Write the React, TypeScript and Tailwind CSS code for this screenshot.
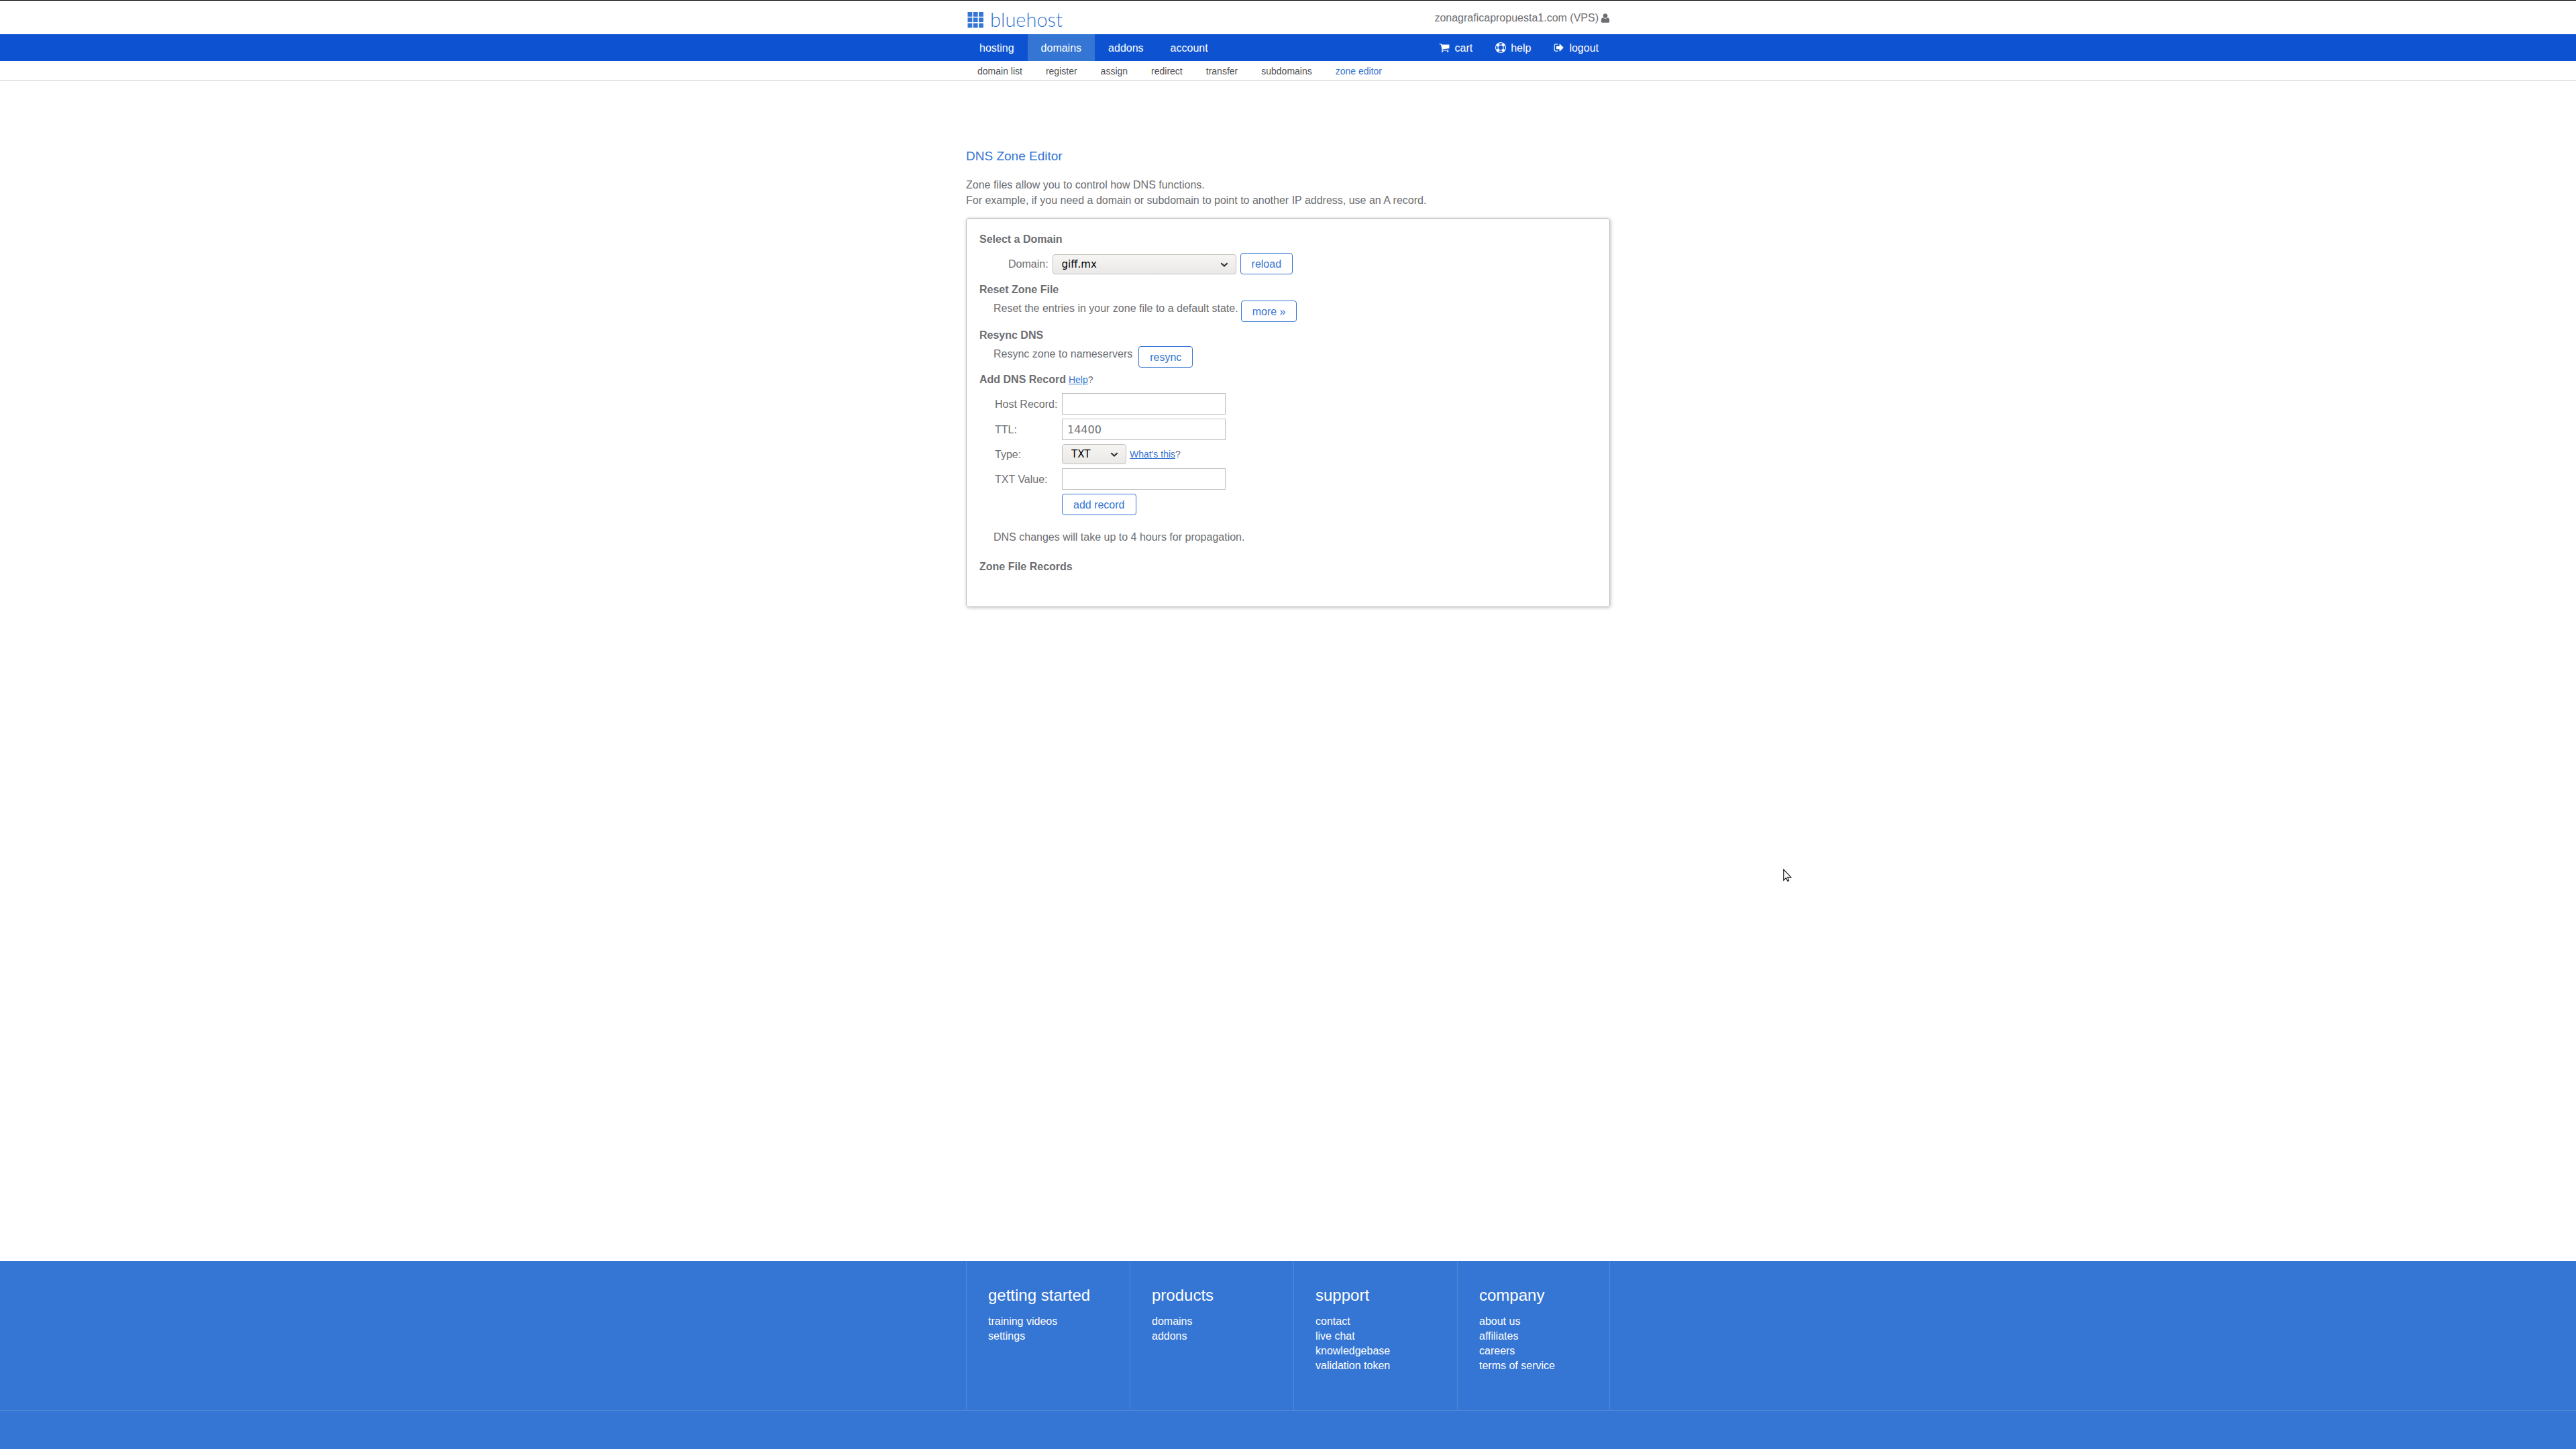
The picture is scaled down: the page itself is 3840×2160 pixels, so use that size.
import React from "react";

const ICONS = {
  cart: "M704 1536q0 52-38 90t-90 38-90-38-38-90 38-90 90-38 90 38 38 90zm896 0q0 52-38 90t-90 38-90-38-38-90 38-90 90-38 90 38 38 90zm128-1088v512q0 24-16.5 42.5t-40.5 21.5l-1044 122q13 60 13 70 0 16-24 64h920q26 0 45 19t19 45-19 45-45 19h-1024q-26 0-45-19t-19-45q0-11 8-31.5t16-36 21.5-40 15.5-29.5l-177-823h-204q-26 0-45-19t-19-45 19-45 45-19h256q16 0 28.5 6.5t19.5 15.5 13 24.5 8 26 5.5 29.5 4.5 26h1201q26 0 45 19t19 45z",
  help: "M896 0q182 0 348 71t286 191 191 286 71 348-71 348-191 286-286 191-348 71-348-71-286-191-191-286-71-348 71-348 191-286 286-191 348-71zm0 128q-190 0-361 90l194 194q82-28 167-28t167 28l194-194q-171-90-361-90zm-678 1129l194-194q-28-82-28-167t28-167l-194-194q-90 171-90 361t90 361zm678 407q190 0 361-90l-194-194q-82 28-167 28t-167-28l-194 194q171 90 361 90zm0-384q159 0 271.5-112.5t112.5-271.5-112.5-271.5-271.5-112.5-271.5 112.5-112.5 271.5 112.5 271.5 271.5 112.5zm484-217l194 194q90-171 90-361t-90-361l-194 194q28 82 28 167t-28 167z",
  logout: "M704 1440q0 4 1 20t.5 26.5-3 23.5-10 19.5-20.5 6.5h-320q-119 0-203.5-84.5t-84.5-203.5v-704q0-119 84.5-203.5t203.5-84.5h320q13 0 22.5 9.5t9.5 22.5q0 4 1 20t.5 26.5-3 23.5-10 19.5-20.5 6.5h-320q-66 0-113 47t-47 113v704q0 66 47 113t113 47h312l11.5 1 11.5 3 8 5.5 7 9 2 13.5zm928-544q0 26-19 45l-544 544q-19 19-45 19t-45-19-19-45v-288h-448q-26 0-45-19t-19-45v-384q0-26 19-45t45-19h448v-288q0-26 19-45t45-19 45 19l544 544q19 19 19 45z",
  user: "M1600 1405q0 120-73 189.5t-194 69.5h-874q-121 0-194-69.5t-73-189.5q0-53 3.5-103.5t14-109 26.5-108.5 43-97.5 62-81 85.5-53.5 111.5-20q9 0 42 21.5t74.5 48 108 48 133.5 21.5 133.5-21.5 108-48 74.5-48 42-21.5q61 0 111.5 20t85.5 53.5 62 81 43 97.5 26.5 108.5 14 109 3.5 103.5zm-320-893q0 159-112.5 271.5t-271.5 112.5-271.5-112.5-112.5-271.5 112.5-271.5 271.5-112.5 271.5 112.5 112.5 271.5z",
};

const mainNav = ["hosting", "domains", "addons", "account"];

const userNav = [
  { label: "cart", icon: ICONS.cart },
  { label: "help", icon: ICONS.help },
  { label: "logout", icon: ICONS.logout },
];

const subNav = [
  "domain list",
  "register",
  "assign",
  "redirect",
  "transfer",
  "subdomains",
  "zone editor",
];

const footerColumns = [
  { title: "getting started", links: ["training videos", "settings"] },
  { title: "products", links: ["domains", "addons"] },
  { title: "support", links: ["contact", "live chat", "knowledgebase", "validation token"] },
  { title: "company", links: ["about us", "affiliates", "careers", "terms of service"] },
];

const Logo = () => (
  <a href="#" className="flex items-center gap-2.5 pl-0.5 text-[#3575d3]">
    <svg className="w-6 h-6 mt-px" viewBox="0 0 24 24" fill="currentColor" aria-hidden="true">
      {[0, 8.3, 16.6].map((y) =>
        [0.5, 8.8, 17.1].map((x) => (
          <rect key={`${x}-${y}`} x={x} y={y} width="6.8" height="6.8" />
        ))
      )}
    </svg>
    <span className="font-[Lato,sans-serif] font-light text-[29px] leading-8">bluehost</span>
  </a>
);

type SelectProps = {
  id: string;
  options: string[];
  className: string;
};

const Select = ({ id, options, className }: SelectProps) => (
  <div className={`relative ${className}`}>
    <select
      id={id}
      className="appearance-none w-full h-[30px] pl-[13px] rounded border border-[#c4bfba] bg-linear-to-b from-[#f6f5f4] to-[#ebe9e8] font-['DejaVu_Sans',sans-serif] text-[15px] text-black"
    >
      {options.map((option) => (
        <option key={option}>{option}</option>
      ))}
    </select>
    <svg
      className="absolute right-3 top-3 w-3 h-2 pointer-events-none"
      viewBox="0 0 12 8"
      fill="none"
      stroke="#2e3436"
      strokeWidth="2.2"
      aria-hidden="true"
    >
      <path d="M1.3 1.2 6 5.6l4.7-4.4" />
    </svg>
  </div>
);

const Button = ({ children }: { children: React.ReactNode }) => (
  <button
    type="button"
    className="h-8 px-4 rounded border border-[#3575d3] bg-white text-[#3575d3] whitespace-nowrap cursor-pointer"
  >
    {children}
  </button>
);

const inputClass =
  "w-[244px] h-8 px-[7px] border border-[#bfbfbf] bg-white font-['DejaVu_Sans',sans-serif]";

const App = () => {
  return (
    <div className="relative min-h-screen flex flex-col bg-white text-[#6d6e71] text-base leading-[23px] font-['Liberation_Sans',Arial,sans-serif]">
      {/* Header */}
      <header>
        <div className="border-t border-black">
          <div className="max-w-[960px] mx-auto h-[50px] flex justify-between items-start">
            <div className="pt-3">
              <Logo />
            </div>
            <div className="flex items-center gap-0.5 pt-3.5">
              <span>zonagraficapropuesta1.com (VPS)</span>
              <svg className="w-4 h-4 -mr-px" viewBox="0 0 1792 1792" fill="currentColor" aria-hidden="true">
                <path d={ICONS.user} />
              </svg>
            </div>
          </div>
        </div>

        <nav className="bg-[#0d53d1] text-white">
          <div className="max-w-[960px] mx-auto flex justify-between">
            <div className="flex">
              {mainNav.map((item) => (
                <a
                  key={item}
                  href="#"
                  className={`h-10 px-5 flex items-center ${item === "domains" ? "bg-[#3575d3]" : ""}`}
                >
                  {item}
                </a>
              ))}
            </div>
            <div className="flex">
              {userNav.map((item) => (
                <a key={item.label} href="#" className="h-10 px-[17px] flex items-center gap-[7px]">
                  <svg className="w-4 h-4" viewBox="0 0 1792 1792" fill="currentColor" aria-hidden="true">
                    <path d={item.icon} />
                  </svg>
                  {item.label}
                </a>
              ))}
            </div>
          </div>
        </nav>

        <nav className="border-b border-[#c8c8c8] text-sm text-[#505052]">
          <div className="max-w-[960px] mx-auto flex gap-px">
            {subNav.map((item) => (
              <a
                key={item}
                href="#"
                className={`h-[29px] px-[17px] flex items-center ${item === "zone editor" ? "text-[#3575d3]" : ""}`}
              >
                {item}
              </a>
            ))}
          </div>
        </nav>
      </header>

      {/* Zone editor */}
      <main className="grow w-full max-w-[960px] mx-auto pt-[100px]">
        <h1 className="text-[19px] leading-[23px] text-[#3575d3]">DNS Zone Editor</h1>
        <p className="mt-5">
          Zone files allow you to control how DNS functions.
          <br />
          For example, if you need a domain or subdomain to point to another IP address, use an A record.
        </p>

        <section className="mt-[15px] px-[19px] pt-[19px] pb-12 rounded border border-[#bfbfbf] shadow-[1px_1px_5px_rgba(0,0,0,0.25)]">
          <h2 className="font-bold">Select a Domain</h2>
          <div className="mt-[9px] pl-[43px] flex items-end gap-1.5">
            <label htmlFor="domain" className="pb-1">
              Domain:
            </label>
            <Select id="domain" options={["giff.mx"]} className="w-[274px]" />
            <Button>reload</Button>
          </div>

          <h2 className="mt-[11px] font-bold">Reset Zone File</h2>
          <div className="mt-[5px] pl-[21px] flex items-start gap-1">
            <span>Reset the entries in your zone file to a default state.</span>
            <Button>more »</Button>
          </div>

          <h2 className="mt-2 font-bold">Resync DNS</h2>
          <div className="mt-[5px] pl-[21px] flex items-start gap-[9px]">
            <span>Resync zone to nameservers</span>
            <Button>resync</Button>
          </div>

          <div className="mt-1.5 flex items-baseline gap-1">
            <h2 className="font-bold">Add DNS Record</h2>
            <span className="text-sm leading-[23px]">
              <a href="#" className="text-[#3575d3] underline">
                Help
              </a>
              ?
            </span>
          </div>
          <form className="mt-2 pl-[23px] grid grid-cols-[100px_1fr] items-center gap-y-1.5">
            <label htmlFor="host">Host Record:</label>
            <input id="host" type="text" className={inputClass} />
            <label htmlFor="ttl">TTL:</label>
            <input id="ttl" type="text" defaultValue="14400" className={inputClass} />
            <label htmlFor="type">Type:</label>
            <div className="flex items-center gap-[5px]">
              <Select id="type" options={["TXT"]} className="w-24" />
              <span className="text-sm leading-[23px]">
                <a href="#" className="text-[#3575d3] underline">
                  What's this
                </a>
                ?
              </span>
            </div>
            <label htmlFor="value">TXT Value:</label>
            <input id="value" type="text" className={inputClass} />
            <div className="col-start-2">
              <Button>add record</Button>
            </div>
          </form>

          <p className="mt-[21px] pl-[21px]">DNS changes will take up to 4 hours for propagation.</p>
          <h2 className="mt-[21px] font-bold">Zone File Records</h2>
        </section>
      </main>

      {/* Footer */}
      <footer className="bg-[#3575d3] text-white">
        <div className="border-b border-[#5188d9]">
          <div className="max-w-[960px] h-[222px] mx-auto flex border-r border-[#5188d9]">
            {footerColumns.map((column) => (
              <div key={column.title} className="w-[244px] last:w-auto pt-[35px] pl-8 border-l border-[#5188d9]">
                <h3 className="text-2xl leading-8">{column.title}</h3>
                <ul className="mt-3 leading-[22px]">
                  {column.links.map((link) => (
                    <li key={link}>
                      <a href="#">{link}</a>
                    </li>
                  ))}
                </ul>
              </div>
            ))}
          </div>
        </div>
        <div className="h-[57px]" />
      </footer>

      {/* Mouse pointer */}
      <svg
        className="absolute left-[2658px] top-[1295px] w-3.5 h-5 pointer-events-none"
        viewBox="0 0 14 20"
        fill="white"
        stroke="black"
        strokeWidth="1.1"
        aria-hidden="true"
      >
        <path d="M.8 1.2v16l3.7-3.5 2.2 4.6q1 .6 2-.7l-2-4.7h5.2z" />
      </svg>
    </div>
  );
};

export default App;
